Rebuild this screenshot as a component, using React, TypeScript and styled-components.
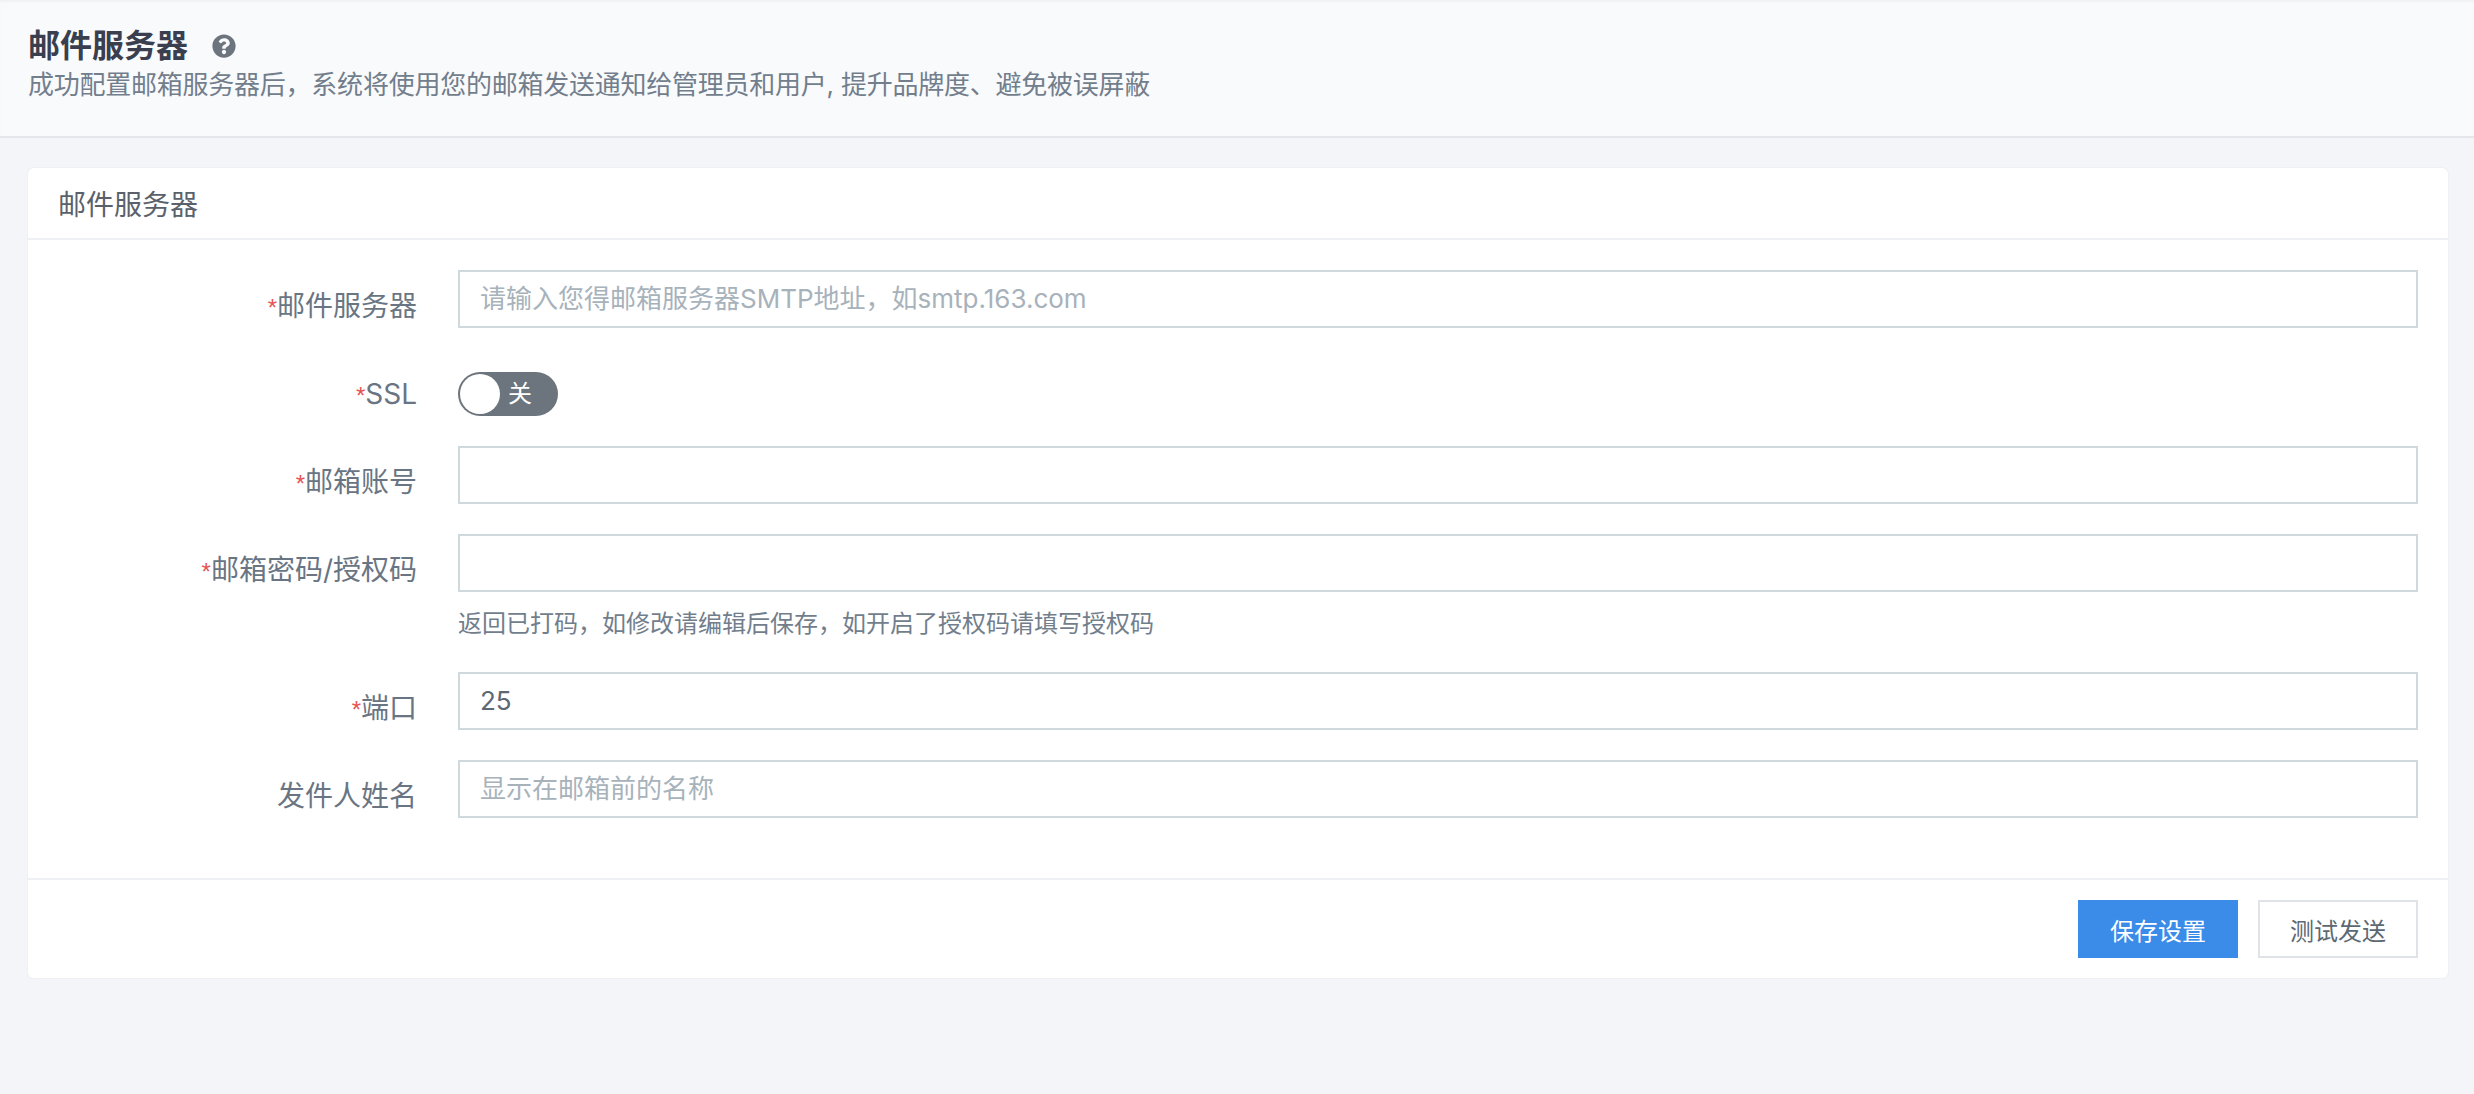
import React from "react";
import styled, { createGlobalStyle } from "styled-components";
import { FaQuestionCircle } from "react-icons/fa";

const GlobalStyle = createGlobalStyle`
  html, body {
    margin: 0;
    padding: 0;
    background: #f4f5f9;
  }
  * {
    box-sizing: border-box;
  }
  body {
    font-family: Inter, "Noto Sans CJK SC", sans-serif;
    color: #5c6873;
  }
`;

const Page = styled.div`
  min-height: 1094px;
  background: #f4f5f9;
`;

const Header = styled.header`
  height: 138px;
  padding: 26px 28px 0;
  background: #f9fafc;
  border-bottom: 2px solid #e4e6ec;
  box-shadow: inset 0 3px 3px -1px rgba(0, 0, 0, 0.04);
`;

const TitleRow = styled.div`
  display: flex;
  align-items: center;
  gap: 24px;
  height: 40px;
`;

const Title = styled.h1`
  margin: 0;
  font-size: 32px;
  line-height: 40px;
  font-weight: 700;
  color: #393f4f;
`;

const HelpIcon = styled(FaQuestionCircle)`
  width: 24px;
  height: 24px;
  color: #6c757d;
`;

const Subtitle = styled.p`
  margin: 1px 0 0;
  font-size: 26px;
  line-height: 36px;
  letter-spacing: -0.24px;
  color: #727e8c;
`;

const Content = styled.main`
  padding: 30px 26px 0 28px;
`;

const Card = styled.section`
  background: #fff;
  border-radius: 6px;
  box-shadow: 0 0 0 1px #eef0f3;
`;

const CardHeader = styled.div`
  height: 72px;
  padding: 0 30px;
  display: flex;
  align-items: center;
  font-size: 28px;
  color: #5a616b;
  border-bottom: 2px solid #eef0f3;
`;

const CardBody = styled.div`
  padding: 30px 30px 60px 0;
  display: flex;
  flex-direction: column;
  gap: 30px;
`;

const Row = styled.div`
  display: grid;
  grid-template-columns: 389px 1fr;
  column-gap: 41px;
`;

const Label = styled.label`
  height: 58px;
  text-align: right;
  font-size: 28px;
  line-height: 40px;
  color: #6a7583;
  padding-top: 16px;
`;

const Star = styled.span`
  font-family: "Liberation Sans", sans-serif;
  font-size: 24px;
  color: #e55353;
`;

const Field = styled.div`
  display: flex;
  flex-direction: column;
`;

const Input = styled.input`
  display: block;
  width: 100%;
  height: 58px;
  padding: 0 20px 2px;
  border: 2px solid #cfd8dc;
  border-radius: 0;
  background: #fff;
  font: inherit;
  font-size: 26px;
  color: #5c6873;
  outline: none;

  &::placeholder {
    color: #a7b2bb;
    opacity: 1;
  }
`;

const HelpText = styled.div`
  height: 35px;
  margin-top: 15px;
  font-size: 24px;
  line-height: 33px;
  color: #727e8c;
`;

const SwitchCell = styled.div`
  padding-top: 14px;
`;

const Switch = styled.div`
  position: relative;
  width: 100px;
  height: 44px;
  border-radius: 22px;
  background: #6c757d;
  color: #fff;
  font-size: 24px;
  line-height: 44px;
  padding-left: 50px;
`;

const Knob = styled.span`
  position: absolute;
  left: 2px;
  top: 2px;
  width: 40px;
  height: 40px;
  border-radius: 50%;
  background: #fff;
`;

const CardFooter = styled.div`
  height: 100px;
  padding: 20px 30px 0 0;
  display: flex;
  justify-content: flex-end;
  gap: 20px;
  border-top: 2px solid #eef0f3;
`;

const Button = styled.button<{ $primary?: boolean }>`
  width: 160px;
  height: 58px;
  padding: 0;
  border-radius: 0;
  font: inherit;
  font-size: 24px;
  border: 2px solid ${(p) => (p.$primary ? "#3b8ce8" : "#dfe3e7")};
  background: ${(p) => (p.$primary ? "#3b8ce8" : "#fff")};
  color: ${(p) => (p.$primary ? "#fff" : "#5c6873")};
`;

export default function App() {
  return (
    <Page>
      <GlobalStyle />
      <Header>
        <TitleRow>
          <Title>邮件服务器</Title>
          <HelpIcon />
        </TitleRow>
        <Subtitle>成功配置邮箱服务器后，系统将使用您的邮箱发送通知给管理员和用户, 提升品牌度、避免被误屏蔽</Subtitle>
      </Header>
      <Content>
        <Card>
          <CardHeader>邮件服务器</CardHeader>
          <CardBody>
            <Row>
              <Label><Star>*</Star>邮件服务器</Label>
              <Input placeholder="请输入您得邮箱服务器SMTP地址，如smtp.163.com" />
            </Row>
            <Row>
              <Label><Star>*</Star>SSL</Label>
              <SwitchCell>
                <Switch>
                  <Knob />关
                </Switch>
              </SwitchCell>
            </Row>
            <Row>
              <Label><Star>*</Star>邮箱账号</Label>
              <Input />
            </Row>
            <Row>
              <Label><Star>*</Star>邮箱密码/授权码</Label>
              <Field>
                <Input />
                <HelpText>返回已打码，如修改请编辑后保存，如开启了授权码请填写授权码</HelpText>
              </Field>
            </Row>
            <Row>
              <Label><Star>*</Star>端口</Label>
              <Input defaultValue="25" />
            </Row>
            <Row>
              <Label>发件人姓名</Label>
              <Input placeholder="显示在邮箱前的名称" />
            </Row>
          </CardBody>
          <CardFooter>
            <Button $primary>保存设置</Button>
            <Button>测试发送</Button>
          </CardFooter>
        </Card>
      </Content>
    </Page>
  );
}
